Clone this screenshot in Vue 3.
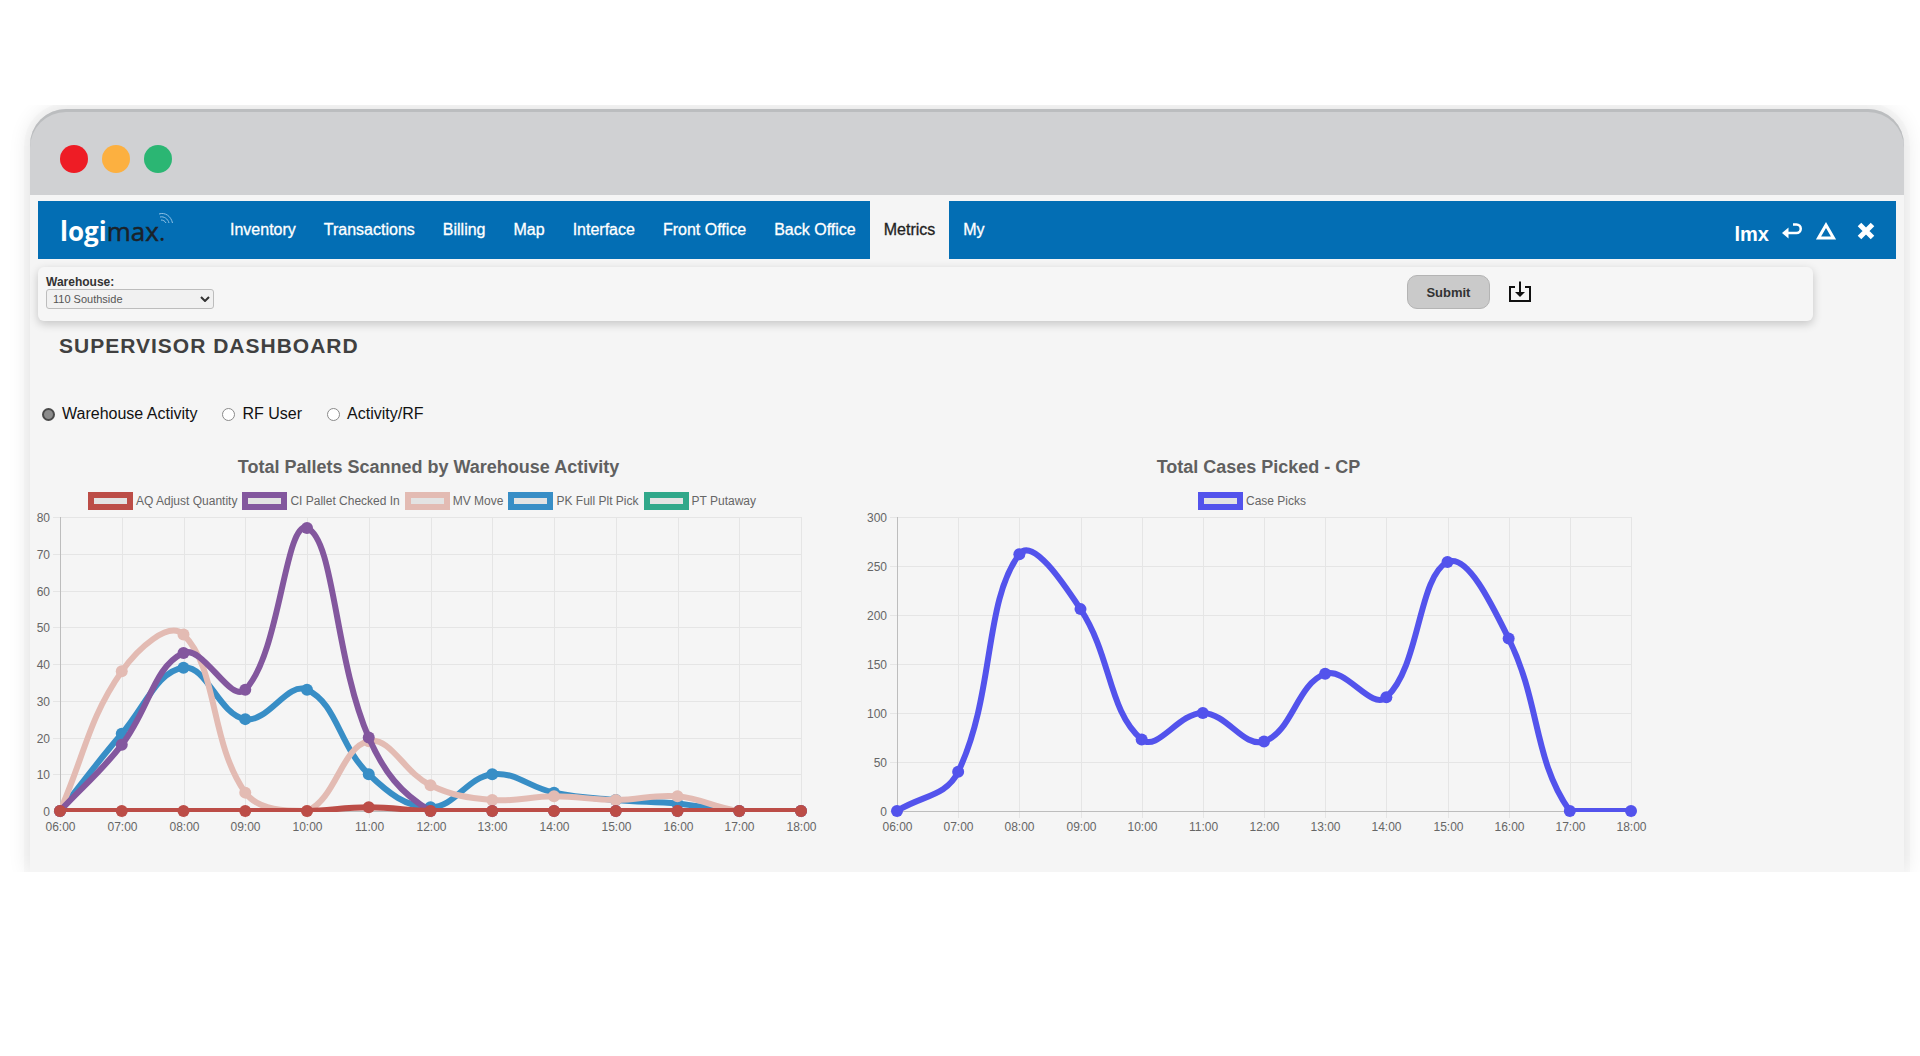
<script setup>
import { ref } from 'vue'

const tabs = ['Inventory', 'Transactions', 'Billing', 'Map', 'Interface', 'Front Office', 'Back Office', 'Metrics', 'My']
const activeTab = 'Metrics'
const views = ['Warehouse Activity', 'RF User', 'Activity/RF']
const view = ref(views[0])
const warehouse = ref('110 Southside')
const hours = Array.from({ length: 13 }, (_, i) => String(i + 6).padStart(2, '0') + ':00')

// Control points of a tension spline, capped to the plot area.
function splinePath(pts, top, bottom, tension = 0.4) {
  const cap = (y) => Math.min(bottom, Math.max(top, y))
  const ctrl = pts.map((p, i) => {
    const a = pts[i - 1] || p
    const b = pts[i + 1] || p
    const d1 = Math.hypot(p.x - a.x, p.y - a.y)
    const d2 = Math.hypot(b.x - p.x, b.y - p.y)
    const f1 = (tension * d1) / (d1 + d2)
    const f2 = (tension * d2) / (d1 + d2)
    return {
      px: p.x - f1 * (b.x - a.x), py: cap(p.y - f1 * (b.y - a.y)),
      nx: p.x + f2 * (b.x - a.x), ny: cap(p.y + f2 * (b.y - a.y))
    }
  })
  return pts.map((p, i) => i === 0
    ? `M${p.x} ${p.y}`
    : `C${ctrl[i - 1].nx} ${ctrl[i - 1].ny} ${ctrl[i].px} ${ctrl[i].py} ${p.x} ${p.y}`).join('')
}

function makeChart({ id, title, left, right, max, step, series }) {
  const top = 7
  const bottom = 301
  const x = (i) => left + ((right - left) * i) / 12
  const y = (v) => bottom - ((bottom - top) * v) / max
  const rows = []
  for (let v = 0; v <= max; v += step) rows.push({ v, y: Math.round(y(v)) + 0.5 })
  const cols = hours.map((label, i) => ({ label, x: Math.round(x(i)) + 0.5 }))
  const lines = series.map((s) => {
    const pts = s.data.map((v, i) => ({ x: x(i), y: y(v) }))
    return { ...s, pts, d: splinePath(pts, top, bottom) }
  })
  return { id, title, left, right, top, bottom, rows, cols, legend: series, lines: lines.reverse() }
}

const charts = [
  makeChart({
    id: 'pallets', title: 'Total Pallets Scanned by Warehouse Activity', left: 22, right: 763, max: 80, step: 10,
    series: [
      { name: 'AQ Adjust Quantity', color: '#bc4d47', data: [0, 0, 0, 0, 0, 1, 0, 0, 0, 0, 0, 0, 0] },
      { name: 'CI Pallet Checked In', color: '#83579e', data: [0, 18, 43, 33, 77, 20, 0, 0, 0, 0, 0, 0, 0] },
      { name: 'MV Move', color: '#e3bbb3', data: [0, 38, 48, 5, 0, 19, 7, 3, 4, 3, 4, 0, 0] },
      { name: 'PK Full Plt Pick', color: '#388ec6', data: [0, 21, 39, 25, 33, 10, 1, 10, 5, 3, 2, 0, 0] },
      { name: 'PT Putaway', color: '#30a88a', data: [] }
    ]
  }),
  makeChart({
    id: 'cases', title: 'Total Cases Picked - CP', left: 29, right: 763, max: 300, step: 50,
    series: [
      { name: 'Case Picks', color: '#5353ec', data: [0, 40, 262, 206, 73, 100, 71, 140, 116, 254, 176, 0, 0] }
    ]
  })
]
</script>

<template>
  <div class="stage">
    <div class="window">
      <div class="titlebar">
        <span class="dot red"></span>
        <span class="dot amber"></span>
        <span class="dot green"></span>
      </div>

      <header class="navbar">
        <a class="logo" href="#" aria-label="logimax">
          <span class="logo-a">logi</span><span class="logo-b">max</span><span class="logo-dot">.</span>
          <svg class="logo-waves" viewBox="0 0 16 14" width="16" height="14" fill="none" stroke="#8ec1e6" aria-hidden="true">
            <path d="M1 2C7 0 13 4 14.500 11" />
            <path d="M2 5C6 4 10 7 11 11" />
            <path d="M3 8C5 8 7 9 8 11" />
          </svg>
        </a>
        <nav class="tabs">
          <a v-for="t in tabs" :key="t" href="#" class="tab" :class="{ active: t === activeTab }">{{ t }}</a>
        </nav>
        <div class="tools">
          <span class="user">lmx</span>
          <button type="button" class="icon-btn" aria-label="Back">
            <svg viewBox="0 0 22 18" width="22" height="18" fill="none" stroke="currentColor" stroke-width="2.500">
              <path d="M12 2.500h3.500a4.200 4.200 0 0 1 0 8.500H5" />
              <path d="M7.500 5.500L1 11l6.500 5.500V5.500z" fill="currentColor" stroke="none" />
            </svg>
          </button>
          <button type="button" class="icon-btn" aria-label="Up">
            <svg viewBox="0 0 22 18" width="22" height="18" fill="none" stroke="currentColor" stroke-width="3">
              <path d="M11 3L18.500 16H3.500z" />
            </svg>
          </button>
          <button type="button" class="icon-btn close" aria-label="Close">
            <svg viewBox="0 0 18 18" width="18" height="18" fill="none" stroke="currentColor" stroke-width="5">
              <path d="M2.500 2.500L15.500 15.500M15.500 2.500L2.500 15.500" />
            </svg>
          </button>
        </div>
      </header>

      <form class="filters" @submit.prevent>
        <div class="field">
          <label for="warehouse">Warehouse:</label>
          <div class="select-wrap">
            <select id="warehouse" v-model="warehouse">
              <option>110 Southside</option>
            </select>
            <svg class="chevron" viewBox="0 0 10 6" width="10" height="6" fill="none" stroke="#333" stroke-width="2" aria-hidden="true">
              <path d="M1 1l4 4 4-4" />
            </svg>
          </div>
        </div>
        <div class="actions">
          <button type="submit" class="submit">Submit</button>
          <button type="button" class="download" aria-label="Download">
            <svg viewBox="0 0 24 22" width="24" height="22" fill="none" stroke="#111" stroke-width="2">
              <path d="M7 6H2v14h20V6h-5" />
              <path d="M12 0.500v12" />
              <path d="M7 11h10l-5 5z" fill="#111" stroke="none" />
            </svg>
          </button>
        </div>
      </form>

      <main>
        <h1>SUPERVISOR DASHBOARD</h1>

        <div class="views" role="radiogroup" aria-label="View">
          <label v-for="v in views" :key="v">
            <input v-model="view" type="radio" name="view" :value="v" />{{ v }}
          </label>
        </div>

        <div class="charts">
          <section v-for="c in charts" :key="c.id" class="chart">
            <h2>{{ c.title }}</h2>
            <ul class="legend">
              <li v-for="s in c.legend" :key="s.name">
                <span class="swatch" :style="{ borderColor: s.color }"></span>{{ s.name }}
              </li>
            </ul>
            <svg class="plot" viewBox="0 0 781 325" role="img" :aria-label="c.title">
              <defs>
                <clipPath :id="'clip-' + c.id">
                  <rect :x="c.left" :y="c.top" :width="c.right - c.left" :height="c.bottom - c.top + 1" />
                </clipPath>
              </defs>
              <g class="grid">
                <line v-for="r in c.rows" :key="r.v" :x1="c.left - 7" :x2="c.right" :y1="r.y" :y2="r.y" />
                <line v-for="k in c.cols" :key="k.label" :x1="k.x" :x2="k.x" :y1="c.top" :y2="c.bottom + 7" />
              </g>
              <path class="axis" :d="`M${c.left + 0.5} ${c.top}V${c.bottom + 0.5}H${c.right}`" />
              <g class="ylabels">
                <text v-for="r in c.rows" :key="r.v" :x="c.left - 10" :y="r.y + 4">{{ r.v }}</text>
              </g>
              <g class="xlabels">
                <text v-for="k in c.cols" :key="k.label" :x="k.x" y="321">{{ k.label }}</text>
              </g>
              <g v-for="l in c.lines" :key="l.name">
                <path class="line" :d="l.d" :stroke="l.color" :clip-path="`url(#clip-${c.id})`" />
                <circle v-for="(p, i) in l.pts" :key="i" :cx="p.x" :cy="p.y" r="6" :fill="l.color" />
              </g>
            </svg>
          </section>
        </div>
      </main>
    </div>
  </div>
</template>

<style>
body {
  background: #fff;
}
</style>

<style scoped>
* {
  box-sizing: border-box;
}
.stage {
  margin-top: 105px;
  padding: 4px 16px 0 30px;
  overflow: hidden;
  font-family: "Liberation Sans", Arial, sans-serif;
}
.window {
  background: #f5f5f5;
  border-radius: 36px 36px 0 0;
  box-shadow: 0 0 0 6px rgba(0, 0, 0, 0.015), 0 0 22px rgba(0, 0, 0, 0.12);
  padding-bottom: 37px;
}
.titlebar {
  display: flex;
  align-items: center;
  gap: 14px;
  height: 86px;
  padding: 14px 30px 0;
  background: #d0d1d3;
  border-radius: 36px 36px 0 0;
  box-shadow: inset 0 3px 0 #bbbdbf;
}
.dot {
  width: 28px;
  height: 28px;
  border-radius: 50%;
}
.red { background: #ee1c25; }
.amber { background: #fcb040; }
.green { background: #2bb673; }

.navbar {
  display: flex;
  align-items: stretch;
  height: 58px;
  margin: 6px 8px 0;
  background: #036eb4;
}
.logo {
  position: relative;
  display: flex;
  align-items: center;
  width: 178px;
  padding: 2px 0 0 22px;
  font: 26px/30px "Open Sans", "Noto Sans", sans-serif;
  text-decoration: none;
}
.logo-a {
  font-weight: 700;
  color: #fff;
}
.logo-b,
.logo-dot {
  color: #1b2229;
}
.logo-b {
  -webkit-text-stroke: 0.5px currentColor;
}
.logo-waves {
  position: absolute;
  left: 120px;
  top: 11px;
}
.tabs {
  display: flex;
}
.tab {
  display: flex;
  align-items: center;
  padding: 0 14px;
  font-size: 16px;
  color: #fff;
  text-decoration: none;
  -webkit-text-stroke: 0.3px currentColor;
}
.tab.active {
  background: #f5f5f5;
  color: #222;
}
.tools {
  display: flex;
  align-items: center;
  gap: 12px;
  margin-left: auto;
  padding: 2px 21px 0 0;
  color: #fff;
}
.user {
  padding-top: 6px;
  font-size: 20px;
  font-weight: 700;
}
.icon-btn,
.download {
  display: flex;
  padding: 0;
  border: 0;
  background: none;
  color: inherit;
}
.close {
  margin-left: 8px;
}

.filters {
  display: flex;
  justify-content: space-between;
  align-items: center;
  height: 54px;
  margin: 8px 91px 0 8px;
  padding: 0 15% 4px 8px;
  background: #f6f6f6;
  border-radius: 6px;
  box-shadow: 0 3px 10px rgba(0, 0, 0, 0.2);
}
.field label {
  display: block;
  font-size: 12px;
  line-height: 14px;
  font-weight: 700;
  color: #333;
}
.select-wrap {
  position: relative;
  width: 168px;
}
select {
  display: block;
  appearance: none;
  width: 100%;
  height: 20px;
  padding: 0 6px;
  border: 1px solid #bdbdbd;
  border-radius: 3px;
  background: #f1f1f1;
  font: 11px/18px "Liberation Sans", Arial, sans-serif;
  color: #555;
}
.chevron {
  position: absolute;
  right: 4px;
  top: 7px;
  pointer-events: none;
}
.actions {
  display: flex;
  align-items: center;
  gap: 18px;
}
.submit {
  width: 83px;
  height: 34px;
  border: 1px solid #b4b4b4;
  border-radius: 10px;
  background: #cacaca;
  font: 700 13px "Liberation Sans", Arial, sans-serif;
  color: #333;
}

h1 {
  margin: 13px 0 0 29px;
  font-size: 21px;
  line-height: 24px;
  font-weight: 700;
  letter-spacing: 1px;
  color: #404040;
}
.views {
  display: flex;
  gap: 25px;
  margin: 46px 0 0 12px;
  font-size: 16px;
  line-height: 20px;
  color: #111;
}
.views label {
  display: flex;
  align-items: center;
  gap: 7px;
}
.views input {
  appearance: none;
  width: 13px;
  height: 13px;
  margin: 0;
  border: 1px solid #8a8a8a;
  border-radius: 50%;
  background: #fff;
}
.views input:checked {
  border: 2px solid #4a4a4a;
  background: #8c8c8c;
}

.charts {
  display: grid;
  grid-template-columns: 781fr 781fr 206fr;
  column-gap: 49px;
  margin: 32px 0 0 8px;
}
h2 {
  margin: 0;
  font-size: 18px;
  line-height: 22px;
  font-weight: 700;
  text-align: center;
  color: #606060;
}
.legend {
  display: flex;
  justify-content: center;
  gap: 5px;
  margin: 14px 0 0;
  padding: 0 13px 0 0;
  list-style: none;
  font-size: 12px;
  line-height: 18px;
  color: #666;
}
.legend li {
  display: flex;
  gap: 3px;
  white-space: nowrap;
}
.swatch {
  width: 45px;
  height: 18px;
  border: 6px solid;
  background: #e3e3e3;
}
.plot {
  display: block;
  width: 100%;
  overflow: visible;
  font-size: 12px;
}
.plot text {
  fill: #666;
}
.grid {
  stroke: #e5e5e5;
}
.axis {
  fill: none;
  stroke: #bdbdbd;
}
.ylabels {
  text-anchor: end;
}
.xlabels {
  text-anchor: middle;
}
.line {
  fill: none;
  stroke-width: 6;
}
</style>
